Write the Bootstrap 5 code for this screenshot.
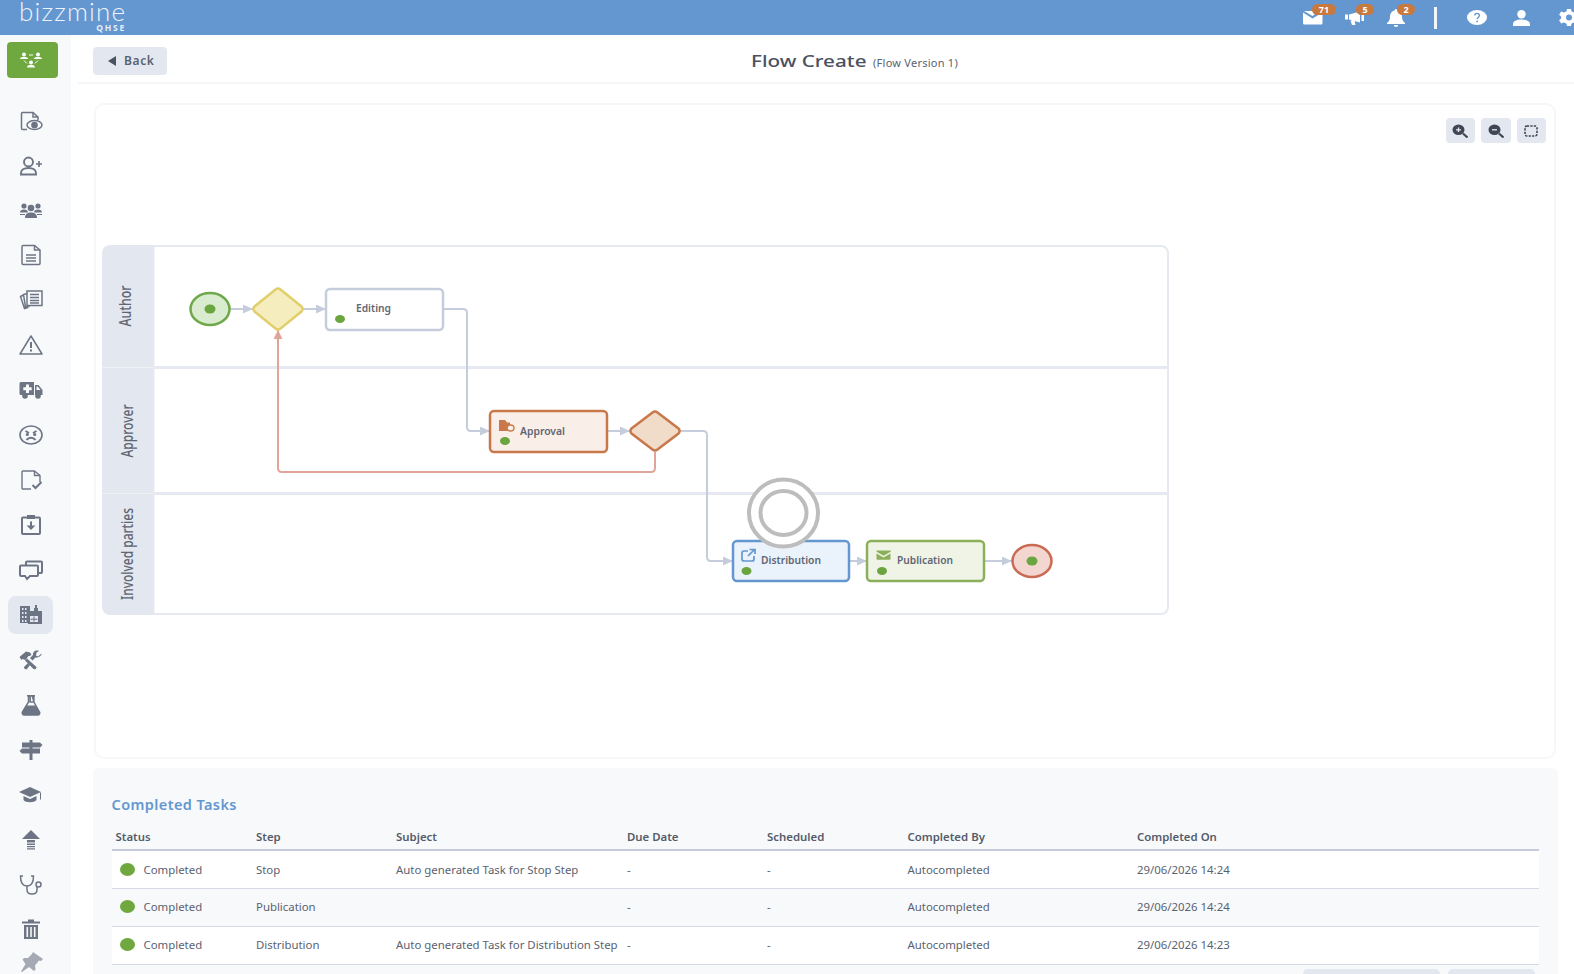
<!DOCTYPE html>
<html lang="en">
<head>
  <meta charset="UTF-8">
  <title>Flow Create</title>
  <link rel="stylesheet" href="https://cdn.jsdelivr.net/npm/bootstrap@5.3.0/dist/css/bootstrap.min.css">
  <style>
    html, body { height: 100%; overflow: hidden; }
    body { font-family: "Noto Sans", sans-serif; color: #5a6270; background: #fff; }
    .top-bar { height: 35px; background: #6497cf; color: #fff; padding: 0 0 0 19px; overflow: hidden; }
    .brand-box { width: 107px; height: 35px; }
    .brand-main { font-family: Lato, sans-serif; font-weight: 300; font-size: 26px; line-height: 23px; letter-spacing: 1.2px; height: 24px; color: #eef4fb; white-space: nowrap; }
    .brand-sub { font-size: 8.5px; line-height: 8px; font-weight: 700; letter-spacing: 1.8px; color: #e4edf7; }
    .top-slot { position: relative; height: 35px; display: flex; align-items: center; }
    .top-slot svg { display: block; overflow: visible; }
    .slot-42 { width: 42px; }
    .slot-47 { width: 47px; }
    .slot-33 { width: 33px; }
    .slot-46 { width: 46px; }
    .slot-44 { width: 44px; }
    .slot-17 { width: 17px; }
    .top-sep { width: 3px; height: 22px; background: #f2f6fb; }
    .count-pill { position: absolute; top: 4px; height: 11px; padding: 0; background: #c8793f; color: #fff; font-size: 9px; line-height: 11px; font-weight: 700; border-radius: 6px; text-align: center; }
    .pill-a { left: 9px; width: 24px; }
    .pill-b { left: 11px; width: 18px; }
    .pill-c { left: 10px; width: 18px; }
    .page-body { height: 939px; }
    .side-rail { width: 71px; flex: none; background: #f8f9fb; height: 939px; color: #6d7585; overflow: hidden; }
    .flow-toggle { flex: none; width: 51px; height: 35.5px; margin: 7px 0 20.6px 7px; padding-right: 4px; background: #6fa83f; border-radius: 4px; }
    .side-item { height: 44.95px; flex: none; padding-right: 9px; }
    .side-item svg { display: block; overflow: visible; }
    .side-on { width: 45px; height: 38px; margin: 3.475px 0 3.475px 8px; padding-right: 0; background: #e3e7ef; border-radius: 8px; }
    .side-pin { height: 24px; opacity: .6; }
    .main-col { min-width: 0; }
    .head-row { height: 49px; margin-left: 7px; padding: 12px 32px 0 15px; border-bottom: 2px solid #f5f6f8; }
    .back-btn { width: 74px; height: 28px; background: #e3e7ef; border: 0; border-radius: 4px; color: #5a6270; font-size: 12px; font-weight: 600; letter-spacing: .6px; padding: 0 0 0 15px; }
    .back-arrow { width: 0; height: 0; border-style: solid; border-width: 5px 8px 5px 0; border-color: transparent #4b5361 transparent transparent; }
    .flow-title { line-height: 28px; white-space: nowrap; }
    .flow-name { display: inline-block; width: 88px; margin-right: 31px; transform: scaleX(1.29); transform-origin: left center; font-size: 16px; font-weight: 500; color: #4a515e; text-align: left; }
    .flow-sub { font-size: 11px; letter-spacing: .25px; color: #5a6270; margin-left: 3px; }
    .canvas-card { position: relative; height: 656px; margin: 19px 18px 0 23px; border: 2px solid #f6f7f9; border-radius: 10px; background: #fff; }
    .canvas-card > svg { display: block; }
    .zoom-tools { position: absolute; top: 13px; right: 8px; gap: 6px; }
    .zoom-btn { width: 29.5px; height: 25px; background: #e3e7ef; border-radius: 4px; }
    .done-panel { height: 206px; margin: 9px 16px 0 22px; padding: 0 19px 0 18.5px; background: #f8f9fb; border-radius: 6px 6px 0 0; overflow: hidden; }
    .done-title { margin: 26px 0 8px; font-size: 14.5px; line-height: 20px; font-weight: 600; letter-spacing: .4px; color: #6497cf; }
    .done-table { table-layout: fixed; width: 100%; margin: 0; font-size: 11.4px; color: #5a6270; }
    .done-table th { height: 28px; padding: 3px 0 0 4px; font-weight: 600; color: #545c6a; background: transparent; border-bottom: 2px solid #c5cbdb; vertical-align: middle; }
    .done-table td { height: 38px; padding: 0 0 0 4px; border-bottom: 1.5px solid #d5d9e3; vertical-align: middle; background: #fff; color: #5a6270; white-space: nowrap; }
    .done-table tr:nth-child(even) td { background: #f8f9fb; }
    .state-dot { width: 15px; height: 13px; border-radius: 50%; background: #6fa83f; margin: 0 9px 0 4px; }
    .col-a { width: 140.5px; } .col-b { width: 140px; } .col-c { width: 231px; } .col-d { width: 140px; } .col-e { width: 140.5px; } .col-f { width: 229.5px; }
    .pager-stub { height: 28px; background: #e3e7ef; border-radius: 5px; }
    .stub-a { width: 137px; }
    .stub-b { width: 87px; }
    .lane-text { font-size: 15.5px; font-weight: 500; fill: #5e6573; }
    .step-text { font-size: 10.5px; font-weight: 600; fill: #5f6673; }
  </style>
</head>
<body>
  <nav class="top-bar d-flex">
    <div class="brand-box d-flex flex-column align-items-end">
      <div class="brand-main align-self-start">bizzmine</div>
      <div class="brand-sub">QHSE</div>
    </div>
    <div class="d-flex ms-auto top-icons">
      <div class="top-slot slot-42">
        <svg width="20" height="14" viewBox="0 0 20 14" fill="#fff"><path d="M1 0h15l-6.500 5zM0 1.500l9.500 6 9-5.500 1 0V12a1.500 1.500 0 0 1-1.500 1.500H1.500A1.500 1.500 0 0 1 0 12z"/></svg>
        <span class="count-pill pill-a">71</span>
      </div>
      <div class="top-slot slot-42">
        <svg width="20" height="14" viewBox="0 0 20 14" fill="#fff"><path d="M0 3.500h3v5H0zM4 3.500 15 .5v11l-11-3zM5.500 9.500h4l1 4.500h-3.500zM16.500 1h2.500v9h-2.500z"/></svg>
        <span class="count-pill pill-b">5</span>
      </div>
      <div class="top-slot slot-47">
        <svg width="18" height="18" viewBox="0 0 18 18" fill="#fff"><path d="M9 0a1.500 1.500 0 0 1 1.500 1.500C13.500 2.200 15 4.500 15 7.500c0 3.500 1 5 3 6.500v1H0v-1c2-1.500 3-3 3-6.500 0-3 1.500-5.300 4.500-6A1.500 1.500 0 0 1 9 0zM6.800 16h4.400a2.200 2 0 0 1-4.400 0z"/></svg>
        <span class="count-pill pill-c">2</span>
      </div>
      <div class="top-slot slot-33"><div class="top-sep"></div></div>
      <div class="top-slot slot-46">
        <svg width="20" height="15" viewBox="0 0 20 15"><ellipse cx="10" cy="7.500" rx="10" ry="7.500" fill="#fff"/><path d="M7.700 5.600c0-3 4.700-3 4.700 0 0 1.800-2.300 1.800-2.300 3.600" fill="none" stroke="#6497cf" stroke-width="1.300"/><circle cx="10.100" cy="11.400" r=".9" fill="#6497cf"/></svg>
      </div>
      <div class="top-slot slot-44">
        <svg width="17" height="16" viewBox="0 0 17 16" fill="#fff"><ellipse cx="8.500" cy="4.200" rx="4.200" ry="4.200"/><path d="M0 16v-2c0-2.800 3.500-4.500 8.500-4.500S17 11.200 17 14v2z"/></svg>
      </div>
      <div class="top-slot slot-17">
        <svg width="24" height="17" viewBox="0 0 24 17" fill="#fff"><path d="M10 0h4l.6 2.500 2.600 1 2.700-1 2 3.200-2 1.800v2l2 1.800-2 3.200-2.700-1-2.600 1L14 17h-4l-.6-2.500-2.600-1-2.700 1-2-3.200 2-1.800v-2l-2-1.800 2-3.200 2.700 1 2.600-1zM12 5.500a3 3 0 1 0 0 6 3 3 0 0 0 0-6z" fill-rule="evenodd"/></svg>
      </div>
    </div>
  </nav>

  <div class="page-body d-flex">
    <aside class="side-rail d-flex flex-column">
      <div class="flow-toggle d-flex align-items-center justify-content-center">
        <svg width="22" height="16" viewBox="0 0 22 16" fill="#fff"><circle cx="4" cy="2.500" r="2"/><path d="M0 7c0-1.500 1.500-2 4-2s4 .5 4 2z"/><circle cx="18" cy="2.500" r="2"/><path d="M14 7c0-1.500 1.500-2 4-2s4 .5 4 2z"/><circle cx="11" cy="10.500" r="2"/><path d="M7 15.500c0-2 1.500-2.500 4-2.500s4 .5 4 2.500z"/><path d="M9 3h4M4 8.500l3 3M18 8.500l-3 3" stroke="#fff" stroke-width="1" fill="none"/></svg>
      </div>
      <div class="side-item d-flex align-items-center justify-content-center">
        <svg width="24" height="20" viewBox="0 0 24 20" fill="none" stroke="currentColor" stroke-width="1.500"><path d="M8 18.500H3.500a1 1 0 0 1-1-1v-15a1 1 0 0 1 1-1H14l5 4.500v3"/><path d="M14 1.500V6h5"/><ellipse cx="15.500" cy="14" rx="7.500" ry="4.500"/><ellipse cx="15.500" cy="14" rx="2.600" ry="2.600" fill="currentColor"/></svg>
      </div>
      <div class="side-item d-flex align-items-center justify-content-center">
        <svg width="24" height="20" viewBox="0 0 24 20" fill="none" stroke="currentColor" stroke-width="1.900"><circle cx="9.500" cy="6" r="4.500"/><path d="M2 18.500v-1.500c0-3 3-5 7.500-5s7.500 2 7.500 5v1.500z"/><path d="M20 5v6M17 8h6" stroke-width="1.700"/></svg>
      </div>
      <div class="side-item d-flex align-items-center justify-content-center">
        <svg width="24" height="20" viewBox="0 0 24 20" fill="currentColor"><circle cx="5" cy="6" r="2.600"/><path d="M1 12.500c0-2 1.500-3 4-3s4 1 4 3z"/><circle cx="19" cy="6" r="2.600"/><path d="M15 12.500c0-2 1.500-3 4-3s4 1 4 3z"/><circle cx="12" cy="8" r="3.300"/><path d="M6 18c0-4 2.500-5.500 6-5.500S18 14 18 18z"/><path d="M1 14h5v1H1zM18 14h5v1h-5z"/></svg>
      </div>
      <div class="side-item d-flex align-items-center justify-content-center">
        <svg width="24" height="20" viewBox="0 0 24 20" fill="none" stroke="currentColor" stroke-width="1.500"><path d="M3 1.500a1 1 0 0 1 1-1h11.500L21 5v13.500a1 1 0 0 1-1 1H4a1 1 0 0 1-1-1z"/><path d="M15.500.5V5H21M7 10h10M7 13h10M7 16h10"/></svg>
      </div>
      <div class="side-item d-flex align-items-center justify-content-center">
        <svg width="24" height="20" viewBox="0 0 24 20" fill="none" stroke="currentColor" stroke-width="1.500"><rect x="8" y="1" width="15" height="14.500"/><path d="M11 4.500h9M11 7.500h9M11 10.500h9M11 13h9"/><path d="M8 3.500 4.500 4.500 6.500 17l4-.5M4.500 5 1.500 6.500 5.500 18.500 9 17.500"/></svg>
      </div>
      <div class="side-item d-flex align-items-center justify-content-center">
        <svg width="24" height="20" viewBox="0 0 24 20" fill="none" stroke="currentColor" stroke-width="1.500"><path d="M12 1 23 19H1z" stroke-linejoin="round"/><path d="M12 7v6M12 14.500v2" stroke-width="2"/></svg>
      </div>
      <div class="side-item d-flex align-items-center justify-content-center">
        <svg width="24" height="20" viewBox="0 0 24 20" fill="currentColor"><path d="M2 2h13v13H2a1.500 1.500 0 0 1-1.500-1.500v-10A1.500 1.500 0 0 1 2 2z"/><path d="M16 5h3.500l4 5v5H16zM17.500 6.500V10h4l-2.800-3.500z" fill-rule="evenodd"/><path d="M7 4.500h3v2.800h2.700v3H10V13H7v-2.700H4.300v-3H7z" fill="#f8f9fb"/><circle cx="6" cy="16" r="2.800"/><circle cx="19" cy="16" r="2.800"/></svg>
      </div>
      <div class="side-item d-flex align-items-center justify-content-center">
        <svg width="24" height="20" viewBox="0 0 24 20" fill="none" stroke="currentColor" stroke-width="1.600"><ellipse cx="12" cy="10" rx="11" ry="9"/><path d="M6.500 6 10 8M17.500 6 14 8M7.500 15c2-3 7-3 9 0" stroke-width="2"/><circle cx="8.300" cy="9.500" r=".8" fill="currentColor"/><circle cx="15.700" cy="9.500" r=".8" fill="currentColor"/></svg>
      </div>
      <div class="side-item d-flex align-items-center justify-content-center">
        <svg width="24" height="20" viewBox="0 0 24 20" fill="none" stroke="currentColor" stroke-width="1.400"><path d="M12 19H4a1 1 0 0 1-1-1V2a1 1 0 0 1 1-1h11.500L21 5.500V12"/><path d="M15.500 1v4.500H21"/><path d="m13.500 15 3 3 6-6" stroke-width="2"/></svg>
      </div>
      <div class="side-item d-flex align-items-center justify-content-center">
        <svg width="24" height="20" viewBox="0 0 24 20" fill="none" stroke="currentColor" stroke-width="2"><rect x="3" y="2.500" width="18" height="16.500" rx="1"/><rect x="8" y="0" width="8" height="4" fill="currentColor" stroke="none"/><path d="M12 6.500v5" /><path d="M7.500 10.500h9L12 15z" fill="currentColor" stroke="none"/></svg>
      </div>
      <div class="side-item d-flex align-items-center justify-content-center">
        <svg width="24" height="20" viewBox="0 0 24 20" fill="none" stroke="currentColor" stroke-width="2"><path d="M7 5V2.500a1 1 0 0 1 1-1h14a1 1 0 0 1 1 1V12a1 1 0 0 1-1 1h-2"/><path d="M2 5.500h16a1 1 0 0 1 1 1V15a1 1 0 0 1-1 1h-7l-3 3-2-3H2a1 1 0 0 1-1-1V6.500a1 1 0 0 1 1-1z"/></svg>
      </div>
      <div class="side-item side-on d-flex align-items-center justify-content-center">
        <svg width="24" height="20" viewBox="0 0 24 20" fill="currentColor"><path d="M1 1h10v5H9v12H1z"/><path d="M15 6V3h1V0h2v3h1v3h4v13H9V6h6z"/><path d="M11 11h8v6h-8z" fill="#e3e7ef"/><path d="M14.500 11.500h1v5h-1zM11.500 13.800h7v1h-7z"/><path d="M3 3h1.500v2H3zM6 3h1.500v2H6zM3 7h1.500v2H3zM6 7h1.500v2H6zM3 11h1.500v2H3zM6 11h1.500v2H6zM3 15h1.500v2H3zM6 15h1.500v2H6z" fill="#e3e7ef"/></svg>
      </div>
      <div class="side-item d-flex align-items-center justify-content-center">
        <svg width="24" height="20" viewBox="0 0 24 20" fill="currentColor"><path d="M.5 7 7 1.500l4 1 1.500 2L11 6l-1.500 0-3 4-3-1L2.500 10z"/><path d="M8 8.500 17.500 17a2 2 0 0 1-3 2L6 10.500zM22.500 3.500l-3.500 3-2-1 .5-3L20 1c-3-1.500-6.500.5-6 4L11 8l2.500 2.500 3-3c3.500.5 6.500-2.500 6-4z"/><path d="M9 13 5 17a2 2 0 0 0 3 2l3-4z"/></svg>
      </div>
      <div class="side-item d-flex align-items-center justify-content-center">
        <svg width="24" height="20" viewBox="0 0 24 20" fill="currentColor"><path d="M8 0h8v1.500H8z"/><path d="M9.500 1h1.700v6L15 7l-1.800-6h1.700v6L20.500 17a2 2 0 0 1-2 3h-13a2 2 0 0 1-2-3L9.500 7z" fill="none" stroke="currentColor" stroke-width="1.500"/><path d="M7.500 10.500h9L21 17.500a2 2 0 0 1-2 2.500H5a2 2 0 0 1-2-2.500z"/></svg>
      </div>
      <div class="side-item d-flex align-items-center justify-content-center">
        <svg width="24" height="20" viewBox="0 0 24 20" fill="currentColor"><path d="M10.500 0h3v20h-3z"/><path d="M3 2.500h18l2.500 2.500L21 7.500H3zM.5 11 3 8.500h18v5H3z"/></svg>
      </div>
      <div class="side-item d-flex align-items-center justify-content-center">
        <svg width="24" height="20" viewBox="0 0 24 20" fill="currentColor"><path d="M11 2 22 7l-11 5L0 7z"/><path d="M4.500 11 11 14l6.500-3v4c-2 3-11 3-13 0z"/><path d="M21 7.500h1v7h-1z"/></svg>
      </div>
      <div class="side-item d-flex align-items-center justify-content-center">
        <svg width="24" height="20" viewBox="0 0 24 20" fill="currentColor"><path d="M12 0 21 9H3z"/><path d="M8 10h8v2.500H8zM8 13.500h8v1.500H8zM8 16h8v1.200H8zM8 18.200h8v1.200H8z"/></svg>
      </div>
      <div class="side-item d-flex align-items-center justify-content-center">
        <svg width="24" height="20" viewBox="0 0 24 20" fill="none" stroke="currentColor" stroke-width="1.500"><path d="M4 1H1.500c0 6 2 10 6.500 10s6.500-4 6.500-10H12"/><path d="M8 11v4c0 3 2 4 5 4s5-1.500 5-4v-3"/><circle cx="19.500" cy="9.500" r="2.500"/></svg>
      </div>
      <div class="side-item d-flex align-items-center justify-content-center">
        <svg width="24" height="20" viewBox="0 0 24 20" fill="currentColor"><path d="M3 2.500h6V.5h6v2h6V4.500H3z"/><path d="M5 6h14v14H5zM7.500 8v10h1.600V8zm3.700 0v10h1.600V8zm3.700 0v10h1.600V8z" fill-rule="evenodd"/></svg>
      </div>
      <div class="side-item side-pin d-flex align-items-start justify-content-center">
        <svg width="24" height="20" viewBox="0 0 24 20" fill="currentColor"><path d="M14 0 24 7l-2 2-2-.5-4 5 .5 4-1.500 1.500-5-4-7 5-1-.5 4.500-7.500-3-4.500L5 6h4l4-4z"/></svg>
      </div>
    </aside>

    <main class="main-col flex-grow-1">
      <div class="head-row d-flex">
        <button type="button" class="back-btn btn d-flex align-items-center gap-2"><span class="back-arrow"></span><span>Back</span></button>
        <div class="flex-grow-1 text-center flow-title"><span class="flow-name">Flow Create</span><span class="flow-sub">(Flow Version 1)</span></div>
      </div>

      <div class="canvas-card">
        <div class="zoom-tools d-flex">
          <div class="zoom-btn d-flex align-items-center justify-content-center">
            <svg width="16" height="14" viewBox="0 0 16 14"><ellipse cx="6.500" cy="5.800" rx="6" ry="5.300" fill="#3f4754"/><path d="m11 9.500 4.500 4" stroke="#3f4754" stroke-width="2.200"/><path d="M6.500 3.500v4.600M4 5.800h5" stroke="#e3e7ef" stroke-width="1.300"/></svg>
          </div>
          <div class="zoom-btn d-flex align-items-center justify-content-center">
            <svg width="16" height="14" viewBox="0 0 16 14"><ellipse cx="6.500" cy="5.800" rx="6" ry="5.300" fill="#3f4754"/><path d="m11 9.500 4.500 4" stroke="#3f4754" stroke-width="2.200"/><path d="M4 5.800h5" stroke="#e3e7ef" stroke-width="1.300"/></svg>
          </div>
          <div class="zoom-btn d-flex align-items-center justify-content-center">
            <svg width="14" height="12" viewBox="0 0 14 12"><rect x="1" y="1" width="12" height="10" rx="2" fill="none" stroke="#3f4754" stroke-width="1.600" stroke-dasharray="2.200 1.200"/></svg>
          </div>
        </div>

        <svg width="1458" height="652" viewBox="96 105 1458 652">
          <defs>
            <marker id="headGrey" viewBox="0 0 10 10" refX="10" refY="5" markerWidth="10" markerHeight="9" markerUnits="userSpaceOnUse" orient="auto" preserveAspectRatio="none"><path d="M0 0 10 5 0 10z" fill="#c5cddc"/></marker>
            <marker id="headRed" viewBox="0 0 10 10" refX="10" refY="5" markerWidth="9" markerHeight="9" markerUnits="userSpaceOnUse" orient="auto" preserveAspectRatio="none"><path d="M0 0 10 5 0 10z" fill="#dfa598"/></marker>
          </defs>

          <!-- lanes -->
          <path d="M153.500 246H1161a7 7 0 0 1 7 7V607a7 7 0 0 1-7 7H153.500z" fill="#fff" stroke="#e6e9f1" stroke-width="2"/>
          <path d="M153.500 245H110a8 8 0 0 0-8 8V607a8 8 0 0 0 8 8h43.500z" fill="#e3e7ef"/>
          <path d="M102 367.500H153.500" stroke="#edf0f5" stroke-width="1"/>
          <path d="M102 493.500H153.500" stroke="#edf0f5" stroke-width="1"/>
          <path d="M153.500 367.500H1169M153.500 493.500H1169" stroke="#e6e9f1" stroke-width="3"/>
          <text class="lane-text" x="125" y="306" text-anchor="middle" dominant-baseline="central" transform="rotate(-90 125 306)" textLength="41" lengthAdjust="spacingAndGlyphs">Author</text>
          <text class="lane-text" x="127" y="431" text-anchor="middle" dominant-baseline="central" transform="rotate(-90 127 431)" textLength="53" lengthAdjust="spacingAndGlyphs">Approver</text>
          <text class="lane-text" x="127" y="554" text-anchor="middle" dominant-baseline="central" transform="rotate(-90 127 554)" textLength="92" lengthAdjust="spacingAndGlyphs">Involved parties</text>

          <!-- connectors -->
          <g fill="none" stroke="#c5cddc" stroke-width="2">
            <path d="M230 309H253" marker-end="url(#headGrey)"/>
            <path d="M303 309H326" marker-end="url(#headGrey)"/>
            <path d="M443 309H463q4 0 4 4V427q0 4 4 4H490" marker-end="url(#headGrey)"/>
            <path d="M607 431H630" marker-end="url(#headGrey)"/>
            <path d="M680 431H703q4 0 4 4V557q0 4 4 4H733" marker-end="url(#headGrey)"/>
            <path d="M849 561H867" marker-end="url(#headGrey)"/>
            <path d="M984 561H1012" marker-end="url(#headGrey)"/>
          </g>
          <path d="M655 452V468q0 4-4 4H282q-4 0-4-4V330" fill="none" stroke="#dfa598" stroke-width="2" marker-end="url(#headRed)"/>

          <!-- start and gateways -->
          <ellipse cx="210" cy="309" rx="19.500" ry="16" fill="#d9ecd0" stroke="#6fa84a" stroke-width="2.500"/>
          <ellipse cx="210" cy="309" rx="5.500" ry="4.500" fill="#6aa53f"/>
          <path d="M275.500 289.500a4 4 0 0 1 5 0L301.500 306.500a3.500 3.500 0 0 1 0 5L280.500 328.500a4 4 0 0 1-5 0L254.500 311.500a3.500 3.500 0 0 1 0-5z" fill="#f6edbf" stroke="#e0cf6b" stroke-width="2.500"/>
          <path d="M652.500 412.500a4 4 0 0 1 5 0L678.500 428.500a3.500 3.500 0 0 1 0 5L657.500 449.500a4 4 0 0 1-5 0L631.500 433.500a3.500 3.500 0 0 1 0-5z" fill="#f1dcc9" stroke="#c8784a" stroke-width="2.500"/>

          <!-- steps -->
          <rect x="326" y="289" width="117" height="41" rx="4" fill="#fff" stroke="#c5cddc" stroke-width="2.500"/>
          <text class="step-text" x="356" y="312" textLength="35" lengthAdjust="spacingAndGlyphs">Editing</text>
          <ellipse cx="340" cy="319" rx="5" ry="4" fill="#6aa53f"/>

          <rect x="490" y="411" width="117" height="41" rx="4" fill="#f9efe8" stroke="#c8784a" stroke-width="2.500"/>
          <text class="step-text" x="520" y="434.500" textLength="45" lengthAdjust="spacingAndGlyphs">Approval</text>
          <ellipse cx="505" cy="441" rx="5" ry="4" fill="#6aa53f"/>
          <path d="M499 420h6l2 2.500h3v3.500h-3v5h-8z" fill="#c8784a"/>
          <ellipse cx="510.500" cy="428" rx="3.500" ry="3" fill="#f9efe8" stroke="#c8784a" stroke-width="1.400"/>

          <rect x="733" y="541" width="116" height="40" rx="4" fill="#eaf2fb" stroke="#6497cf" stroke-width="2.500"/>
          <text class="step-text" x="761" y="564" textLength="60" lengthAdjust="spacingAndGlyphs">Distribution</text>
          <ellipse cx="746.500" cy="571" rx="5" ry="4" fill="#6aa53f"/>
          <path d="M748 551h-4a2 2 0 0 0-2 2v6a2 2 0 0 0 2 2h8a2 2 0 0 0 2-2v-3M748 556l6-6M749.500 549.500h5.500v4.500" fill="none" stroke="#6497cf" stroke-width="1.700"/>

          <rect x="867" y="541" width="117" height="40" rx="4" fill="#eff4e6" stroke="#8cb05a" stroke-width="2.500"/>
          <text class="step-text" x="897" y="564" textLength="56" lengthAdjust="spacingAndGlyphs">Publication</text>
          <ellipse cx="882" cy="571" rx="5" ry="4" fill="#6aa53f"/>
          <path d="M877 550.500h13a.8.8 0 0 1 .6 1.200l-7 4-7-4a.8.8 0 0 1 .4-1.200zM876.500 553.500l7 4 7-4v5.200a1 1 0 0 1-1 1h-12a1 1 0 0 1-1-1z" fill="#8cb05a"/>

          <!-- end -->
          <ellipse cx="1032" cy="561" rx="19.500" ry="16" fill="#f3d6cf" stroke="#c96a55" stroke-width="2.500"/>
          <ellipse cx="1032" cy="561" rx="5.500" ry="4.500" fill="#6aa53f"/>

          <!-- click marker -->
          <ellipse cx="783.500" cy="513" rx="34.500" ry="33.500" fill="#fff" stroke="#bdbdbd" stroke-width="4"/>
          <ellipse cx="783.500" cy="513" rx="23" ry="22" fill="#fff" stroke="#bdbdbd" stroke-width="4"/>
        </svg>
      </div>

      <section class="done-panel">
        <h2 class="done-title">Completed Tasks</h2>
        <table class="table done-table">
          <colgroup><col class="col-a"><col class="col-b"><col class="col-c"><col class="col-d"><col class="col-e"><col class="col-f"><col></colgroup>
          <thead>
            <tr><th>Status</th><th>Step</th><th>Subject</th><th>Due Date</th><th>Scheduled</th><th>Completed By</th><th>Completed On</th></tr>
          </thead>
          <tbody>
            <tr><td><div class="d-flex align-items-center"><span class="state-dot"></span>Completed</div></td><td>Stop</td><td>Auto generated Task for Stop Step</td><td>-</td><td>-</td><td>Autocompleted</td><td>29/06/2026 14:24</td></tr>
            <tr><td><div class="d-flex align-items-center"><span class="state-dot"></span>Completed</div></td><td>Publication</td><td></td><td>-</td><td>-</td><td>Autocompleted</td><td>29/06/2026 14:24</td></tr>
            <tr><td><div class="d-flex align-items-center"><span class="state-dot"></span>Completed</div></td><td>Distribution</td><td>Auto generated Task for Distribution Step</td><td>-</td><td>-</td><td>Autocompleted</td><td>29/06/2026 14:23</td></tr>
          </tbody>
        </table>
        <div class="d-flex justify-content-end gap-2 mt-1 me-1">
          <div class="pager-stub stub-a"></div>
          <div class="pager-stub stub-b"></div>
        </div>
      </section>
    </main>
  </div>
</body>
</html>
